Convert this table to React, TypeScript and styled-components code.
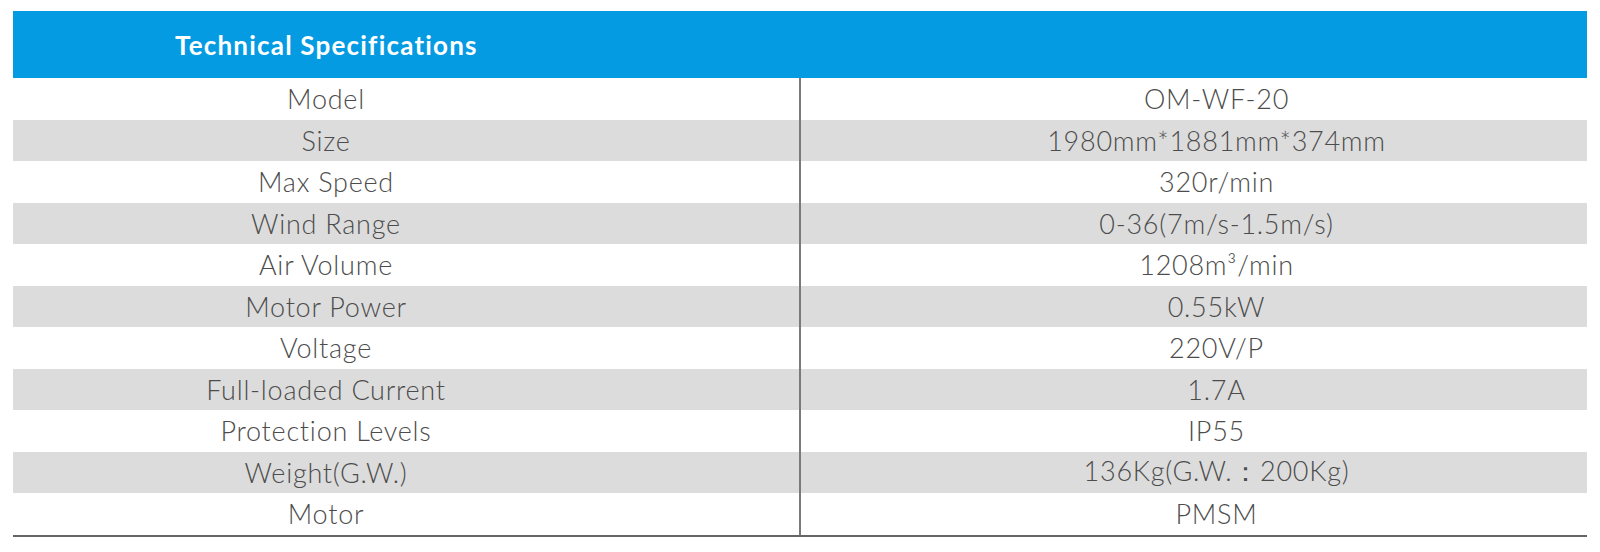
import styled, { createGlobalStyle } from 'styled-components';

type Spec = {
   label: string;
   value: string;
};

const specs: Spec[] = [
   { label: 'Model', value: 'OM-WF-20' },
   { label: 'Size', value: '1980mm*1881mm*374mm' },
   { label: 'Max Speed', value: '320r/min' },
   { label: 'Wind Range', value: '0-36(7m/s-1.5m/s)' },
   { label: 'Air Volume', value: '1208m³/min' },
   { label: 'Motor Power', value: '0.55kW' },
   { label: 'Voltage', value: '220V/P' },
   { label: 'Full-loaded Current', value: '1.7A' },
   { label: 'Protection Levels', value: 'IP55' },
   { label: 'Weight(G.W.)', value: '136Kg(G.W.：200Kg)' },
   { label: 'Motor', value: 'PMSM' },
];

const App = () => {
   return (
      <>
         <GlobalStyle />
         <Page>
            <SpecTable>
               <HeaderBar>Technical Specifications</HeaderBar>
               <Rows>
                  {specs.map((spec, i) => (
                     <Row key={spec.label} shaded={i % 2 === 1}>
                        <LabelCell>{spec.label}</LabelCell>
                        <ValueCell>{spec.value}</ValueCell>
                     </Row>
                  ))}
               </Rows>
            </SpecTable>
         </Page>
      </>
   );
};

const GlobalStyle = createGlobalStyle`
   body {
      margin: 0;
      background: #fff;
   }
`;

const Page = styled.div`
   padding: 11px 13px 0;
`;

const SpecTable = styled.div`
   width: 1574px;
   font-family: Lato, 'Open Sans', sans-serif;
`;

const HeaderBar = styled.div`
   display: flex;
   align-items: center;
   height: 67px;
   padding-left: 162px;
   background: #059be3;
   color: #fff;
   font-size: 26px;
   font-weight: 700;
   letter-spacing: 1.2px;
`;

const Rows = styled.div`
   border-bottom: 2px solid #666;
`;

const Row = styled.div.withConfig({ shouldForwardProp: (p) => p !== 'shaded' })<{ shaded: boolean }>`
   display: grid;
   grid-template-columns: 788px 1fr;
   height: 41.5px;
   background: ${(p) => (p.shaded ? '#dcdcdc' : '#fff')};
   color: #4c4c4c;
   font-size: 27px;
   font-weight: 300;
   letter-spacing: 0.75px;
`;

const LabelCell = styled.div`
   display: flex;
   align-items: center;
   justify-content: center;
   padding-right: 160px;
   border-right: 2px solid #7a7a7a;
`;

const ValueCell = styled.div`
   display: flex;
   align-items: center;
   justify-content: center;
   padding-left: 45px;
`;

export default App;
